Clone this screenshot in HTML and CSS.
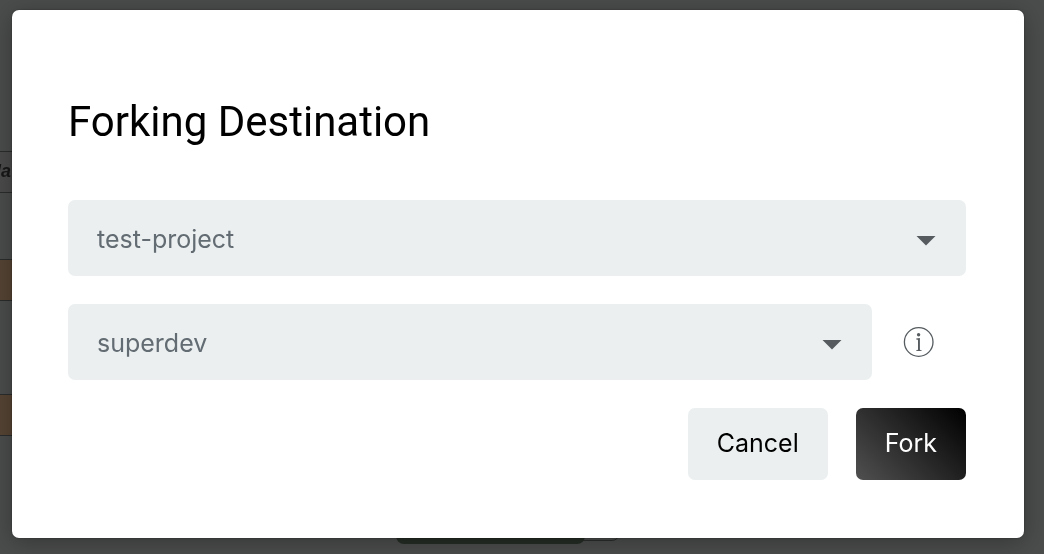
FILE: index.html
```
<!DOCTYPE html>
<html lang="en">
<head>
<meta charset="utf-8">
<title>Forking Destination</title>
<link rel="stylesheet" href="styles.css">
</head>
<body>
<div class="backdrop" aria-hidden="true">
  <div class="page-column">
    <div class="page-heading">la</div>
    <div class="page-row"></div>
    <div class="page-row"></div>
  </div>
  <div class="page-footer"><div class="page-outline"><div class="page-action"></div></div></div>
</div>
<main class="dialog" role="dialog" aria-labelledby="title">
  <h1 class="title" id="title">Forking Destination</h1>
  <form class="form">
    <div class="field">
      <select class="select" aria-label="Project"><option>test-project</option></select>
      <svg class="caret" viewBox="0 0 20 10" aria-hidden="true"><path d="M.5 0h19L10 9.6z"/></svg>
    </div>
    <div class="line">
      <div class="field">
        <select class="select" aria-label="Destination"><option>superdev</option></select>
        <svg class="caret" viewBox="0 0 20 10" aria-hidden="true"><path d="M.5 0h19L10 9.6z"/></svg>
      </div>
      <button class="info" type="button" aria-label="Information">
        <svg class="info-icon" viewBox="0 0 32 32" aria-hidden="true">
          <circle class="ring" cx="15.7" cy="16" r="14.3"/>
          <circle cx="15.6" cy="8.8" r="1.7"/>
          <path d="M13.2 12.6l3.7-.6v11.2c0 .8.5 1 1.7 1.1v.8h-5.4v-.8c1.2-.1 1.8-.3 1.8-1.1v-8.6c0-.8-.5-1-1.8-1.1z"/>
        </svg>
      </button>
    </div>
    <div class="actions">
      <button class="button" type="button">Cancel</button>
      <button class="button primary" type="submit">Fork</button>
    </div>
  </form>
</main>
</body>
</html>
```
FILE: styles.css
```
* { box-sizing: border-box; }
body {
  margin: 0;
  min-height: 100vh;
  padding: 10px 20px 16px 12px;
  display: flex;
  background: #4b4d4c;
  font-family: Inter, sans-serif;
}
.backdrop { position: fixed; inset: 0; overflow: hidden; }
.page-column { width: 12px; padding-top: 151px; }
.page-heading {
  height: 42px;
  padding-right: 1px;
  border: solid #2b2d2d;
  border-width: 1px 0;
  background: #4b4b4b;
  color: #171717;
  font: italic bold 18px/38px "Liberation Sans", sans-serif;
  display: flex;
  justify-content: flex-end;
}
.page-row {
  height: 42px;
  margin-top: 66px;
  border: solid #2b2d2d;
  border-width: 1px 0;
  background: #554434;
}
.page-row + .page-row { margin-top: 93px; }
.page-footer { position: absolute; left: 396px; bottom: 10px; height: 34px; }
.page-outline {
  width: 224px;
  height: 31px;
  border: 1px solid #2b2d2d;
  border-radius: 8px;
}
.page-action {
  width: 189px;
  height: 34px;
  margin: -1px;
  border-radius: 8px;
  background: #252d25;
}
.dialog {
  position: relative;
  flex: 1;
  padding: 83px 58px 58px 56px;
  border-radius: 7px;
  background: #fff;
  box-shadow: 0 4px 24px rgba(0, 0, 0, .3), 0 0 2px rgba(0, 0, 0, .4);
}
.title {
  margin: 0 0 50px;
  color: #000;
  font-family: Roboto, Inter, sans-serif;
  font-size: 42px;
  font-weight: 400;
  line-height: 57px;
}
.form { display: flex; flex-direction: column; gap: 28px; }
.line { display: flex; align-items: center; }
.field { position: relative; flex: 1; display: flex; }
.select {
  appearance: none;
  flex: 1;
  height: 76px;
  padding: 2px 60px 0 29px;
  border: 0;
  border-radius: 7px;
  background: #ebeff0;
  color: #626c72;
  font: 400 25px/32px Inter, sans-serif;
}
.caret {
  position: absolute;
  right: 30px;
  top: 36px;
  width: 20px;
  height: 10px;
  fill: #555b5f;
  pointer-events: none;
}
.info {
  width: 94px;
  padding: 0;
  border: 0;
  background: none;
  display: flex;
  justify-content: center;
}
.info-icon { width: 32px; height: 32px; fill: #555b5f; }
.info-icon .ring { fill: none; stroke: #555b5f; stroke-width: 1.3; }
.actions { display: flex; justify-content: flex-end; gap: 28px; }
.button {
  height: 72px;
  padding: 0 29px 2px;
  border: 0;
  border-radius: 7px;
  background: #ebeff0;
  color: #000;
  font: 400 25px/32px Inter, sans-serif;
}
.primary { background: linear-gradient(45deg, #505050, #000); color: #fff; }
```
